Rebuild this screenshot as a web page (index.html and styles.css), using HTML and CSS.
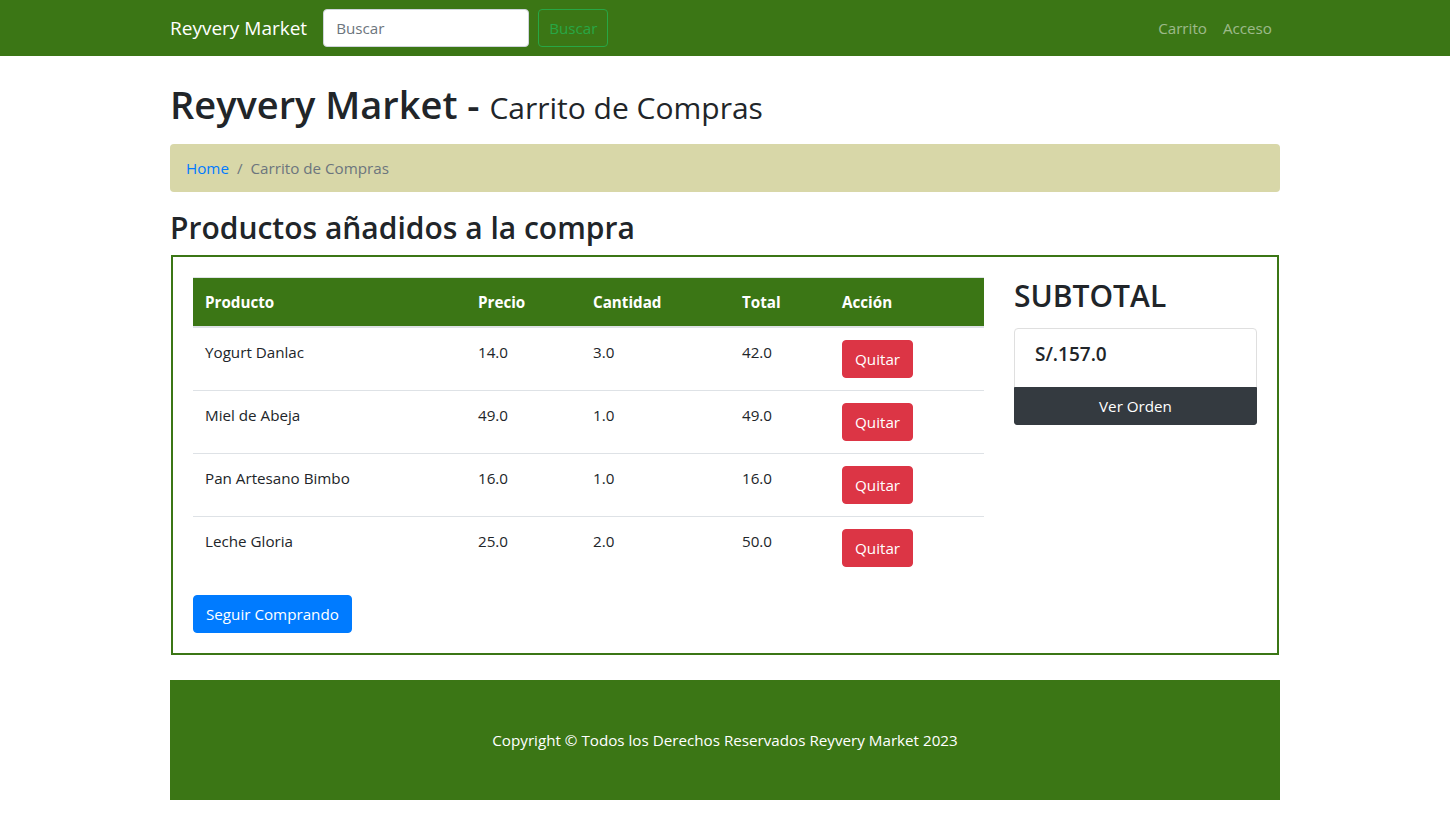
FILE: index.html
```html
<!DOCTYPE html>
<html lang="es">
<head>
<meta charset="utf-8">
<title>Reyvery Market - Carrito de Compras</title>
<link rel="stylesheet" href="styles.css">
</head>
<body>
<nav class="navbar">
  <div class="container nav-inner">
    <a class="brand" href="#">Reyvery Market</a>
    <form class="search">
      <input class="search-input" type="search" placeholder="Buscar">
      <button class="btn btn-outline-success" type="button">Buscar</button>
    </form>
    <ul class="nav-links">
      <li><a href="#">Carrito</a></li>
      <li><a href="#">Acceso</a></li>
    </ul>
  </div>
</nav>

<main class="container">
  <h1 class="page-title">Reyvery Market - <small>Carrito de Compras</small></h1>
  <ol class="breadcrumb">
    <li><a href="#">Home</a></li>
    <li class="sep">/</li>
    <li class="active">Carrito de Compras</li>
  </ol>

  <h2 class="section-title">Productos añadidos a la compra</h2>
  <section class="cart-box">
    <div class="cart-grid">
      <div class="cart-main">
        <table class="cart-table">
          <colgroup>
            <col class="c-prod"><col class="c-price"><col class="c-qty"><col class="c-total"><col class="c-act">
          </colgroup>
          <thead>
            <tr><th>Producto</th><th>Precio</th><th>Cantidad</th><th>Total</th><th>Acción</th></tr>
          </thead>
          <tbody>
            <tr><td>Yogurt Danlac</td><td>14.0</td><td>3.0</td><td>42.0</td><td><button class="btn btn-danger" type="button">Quitar</button></td></tr>
            <tr><td>Miel de Abeja</td><td>49.0</td><td>1.0</td><td>49.0</td><td><button class="btn btn-danger" type="button">Quitar</button></td></tr>
            <tr><td>Pan Artesano Bimbo</td><td>16.0</td><td>1.0</td><td>16.0</td><td><button class="btn btn-danger" type="button">Quitar</button></td></tr>
            <tr><td>Leche Gloria</td><td>25.0</td><td>2.0</td><td>50.0</td><td><button class="btn btn-danger" type="button">Quitar</button></td></tr>
          </tbody>
        </table>
        <button class="btn btn-primary" type="button">Seguir Comprando</button>
      </div>
      <aside class="cart-side">
        <h2 class="subtotal-title">SUBTOTAL</h2>
        <div class="card">
          <div class="card-body">
            <h5 class="amount">S/.157.0</h5>
          </div>
          <button class="btn btn-dark btn-block" type="button">Ver Orden</button>
        </div>
      </aside>
    </div>
  </section>
</main>

<footer class="container footer">
  <p>Copyright © Todos los Derechos Reservados Reyvery Market 2023</p>
</footer>
</body>
</html>
```

FILE: styles.css
```css
* { box-sizing: border-box; }

html, body {
  margin: 0;
  padding: 0;
}

body {
  font-family: "Open Sans", "Noto Sans", "Liberation Sans", sans-serif;
  font-size: 15.2px;
  line-height: 24px;
  color: #212529;
  background: #fff;
}

a { text-decoration: none; }

.container {
  width: 1110px;
  margin: 0 auto;
}

/* Navbar */
.navbar {
  background: #3b7615;
  height: 56px;
}

.nav-inner {
  display: flex;
  align-items: center;
  height: 56px;
}

.brand {
  color: #fff;
  font-size: 19px;
  line-height: 30px;
  margin-right: 16px;
  white-space: nowrap;
}

.search {
  display: flex;
  align-items: center;
  margin: 0;
}

.search-input {
  width: 206px;
  height: 38px;
  padding: 6px 12px;
  font: inherit;
  font-size: 15.2px;
  color: #495057;
  background: #fff;
  border: 1px solid #ced4da;
  border-radius: 4px;
  margin-right: 9px;
  outline: none;
}

.search-input::placeholder { color: #6c757d; }

.nav-links {
  list-style: none;
  margin: 0 0 0 auto;
  padding: 0;
  display: flex;
}

.nav-links a {
  display: block;
  padding: 8px;
  color: rgba(255, 255, 255, 0.5);
  line-height: 24px;
}

/* Buttons */
.btn {
  display: inline-block;
  font: inherit;
  font-size: 15.2px;
  line-height: 24px;
  padding: 6px 12px;
  border: 1px solid transparent;
  border-radius: 4px;
  cursor: pointer;
  color: #fff;
  background: transparent;
}

.btn-outline-success {
  color: #28a745;
  border-color: #28a745;
  padding: 6px 10px;
}

.btn-danger {
  background: #dc3545;
  border-color: #dc3545;
}

.btn-primary {
  background: #007bff;
  border-color: #007bff;
}

.btn-dark {
  background: #343a40;
  border-color: #343a40;
}

.btn-block {
  display: block;
  width: 100%;
}

/* Headings */
.page-title {
  margin: 24px 0 16px;
  font-size: 38px;
  line-height: 48px;
  font-weight: 600;
}

.page-title small {
  font-size: 30px;
  font-weight: 400;
  line-height: 1;
}

.breadcrumb {
  list-style: none;
  display: flex;
  margin: 0 0 16px;
  padding: 12px 16px;
  background: #d8d7a8;
  border-radius: 4px;
  color: #6c757d;
}

.breadcrumb a { color: #007bff; }

.breadcrumb .sep {
  padding: 0 8px;
  color: #6c757d;
}

.section-title {
  margin: 0 0 9px;
  padding-top: 2px;
  font-size: 30px;
  line-height: 36px;
  font-weight: 600;
}

/* Cart box */
.cart-box {
  margin: 0 1px;
  border: 2px solid #3b7615;
  padding: 20px;
}

.cart-grid {
  display: grid;
  grid-template-columns: 1fr 243px;
  column-gap: 30px;
}

.cart-table {
  width: 100%;
  border-collapse: collapse;
  table-layout: fixed;
  margin-bottom: 16px;
}

.c-prod { width: 273px; }
.c-price { width: 115px; }
.c-qty { width: 149px; }
.c-total { width: 100px; }

.cart-table th,
.cart-table td {
  padding: 12px;
  text-align: left;
  vertical-align: top;
  border-top: 1px solid #dee2e6;
}

.cart-table th {
  background: #3b7615;
  color: #fff;
  font-weight: 700;
  border-bottom: 2px solid #dee2e6;
}

/* Side */
.subtotal-title {
  margin: 0 0 13px;
  font-size: 30px;
  line-height: 38px;
  font-weight: 600;
}

.card {
  border: 1px solid #dfdfdf;
  border-radius: 4px;
}

.card-body {
  padding: 13px 20px 21px;
}

.amount {
  margin: 0;
  font-size: 19px;
  line-height: 24px;
  font-weight: 600;
}

.card .btn-dark {
  border-radius: 0 0 3px 3px;
  margin: 0 -1px -1px;
  width: calc(100% + 2px);
}

/* Footer */
.footer {
  margin-top: 25px;
  margin-bottom: 13px;
  background: #3b7615;
  color: #fff;
  text-align: center;
  padding: 48px 0;
}

.footer p {
  margin: 0;
}
```
